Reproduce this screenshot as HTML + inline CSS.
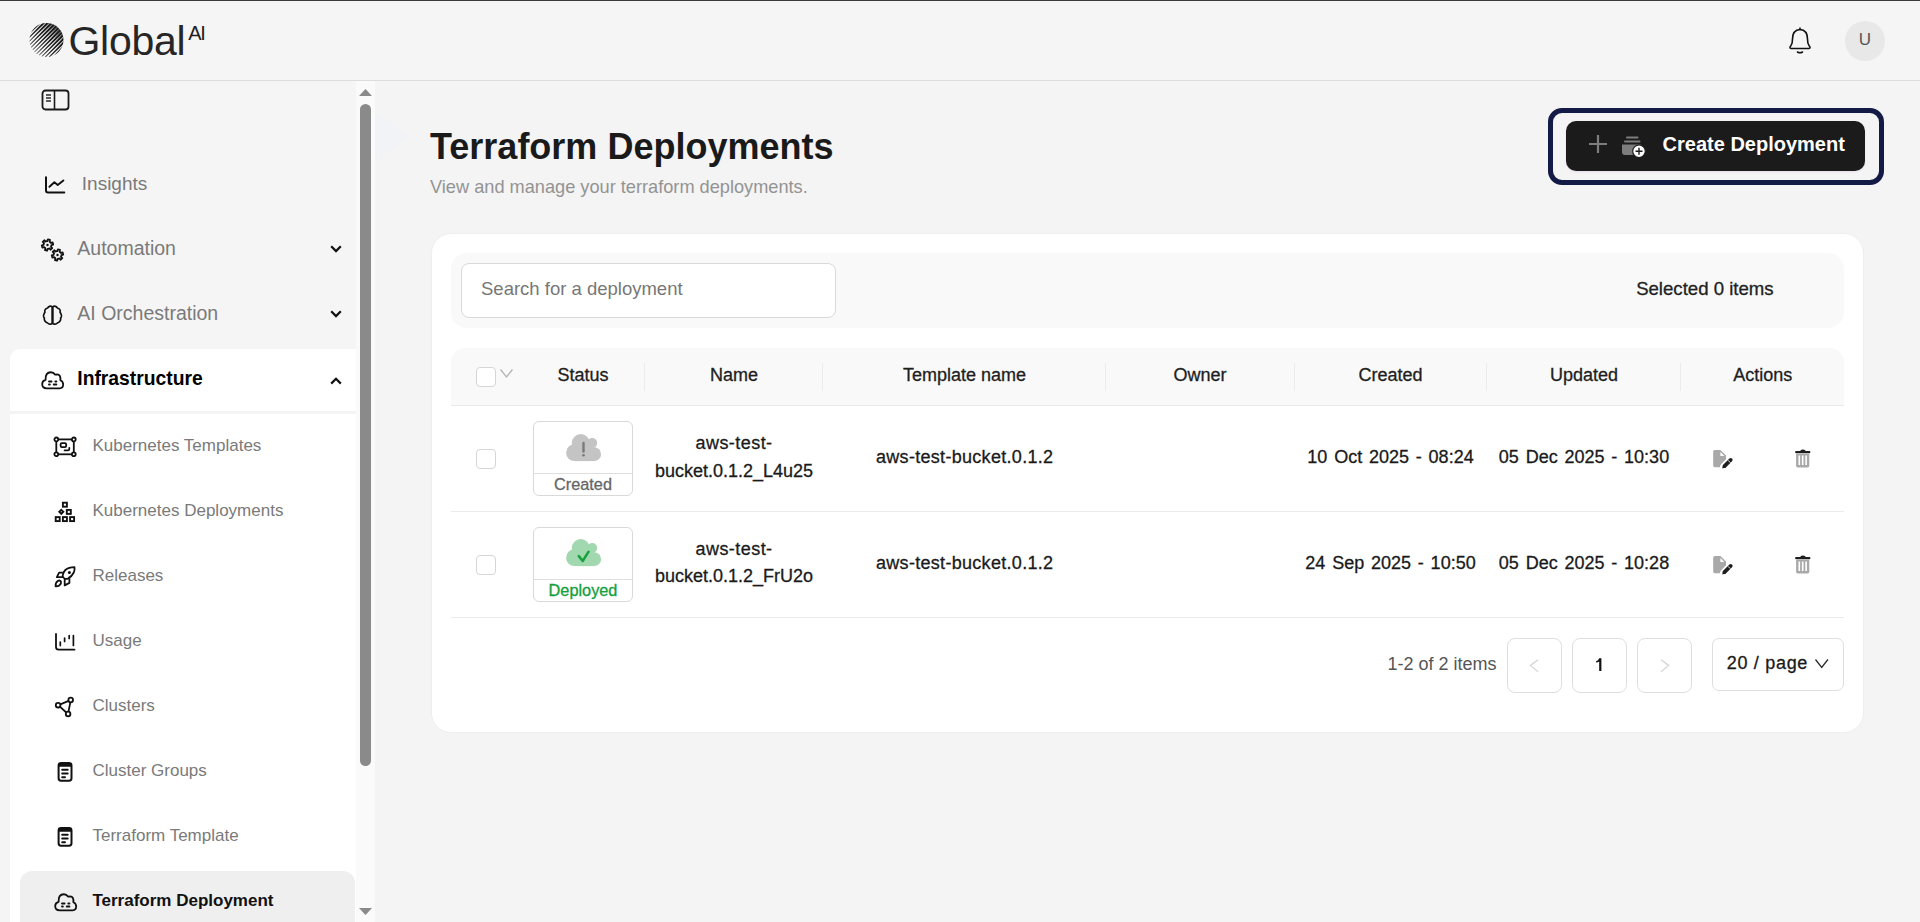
<!DOCTYPE html><html><head><meta charset="utf-8"><title>Terraform Deployments</title><style>
html,body{margin:0;padding:0;}
body{width:1920px;height:922px;overflow:hidden;position:relative;background:#f5f5f5;font-family:"Liberation Sans",sans-serif;}
.t{position:absolute;white-space:nowrap;}
.r{position:absolute;box-sizing:border-box;}
.m{-webkit-text-stroke:0.3px currentColor;}
</style></head><body>
<div class="r" style="left:0px;top:0px;width:1920px;height:1px;background:#3a3a3a"></div>
<div class="r" style="left:0px;top:80px;width:1920px;height:1px;background:#dcdcdc"></div>
<svg class="r" style="left:29px;top:23px" width="36" height="36" viewBox="0 0 36 36"><defs><clipPath id="lc"><circle cx="17.5" cy="17" r="17"/></clipPath></defs><g clip-path="url(#lc)" fill="#1c1c1c"><path d="M-13.33 20.11 L21.67 -12.77 L19.55 -14.89 L-13.33 20.11Z"/><path d="M-11.35 22.09 L23.65 -10.79 L21.53 -12.91 L-11.35 22.09Z"/><path d="M-9.37 24.07 L25.63 -8.81 L23.51 -10.93 L-9.37 24.07Z"/><path d="M-7.39 26.05 L27.61 -6.83 L25.49 -8.95 L-7.39 26.05Z"/><path d="M-5.41 28.03 L29.59 -4.85 L27.47 -6.97 L-5.41 28.03Z"/><path d="M-3.43 30.01 L31.57 -2.87 L29.45 -4.99 L-3.43 30.01Z"/><path d="M-1.45 31.99 L33.55 -0.89 L31.43 -3.01 L-1.45 31.99Z"/><path d="M0.53 33.97 L35.53 1.09 L33.41 -1.03 L0.53 33.97Z"/><path d="M2.51 35.95 L37.51 3.07 L35.39 0.95 L2.51 35.95Z"/><path d="M4.49 37.93 L39.49 5.05 L37.37 2.93 L4.49 37.93Z"/><path d="M6.47 39.91 L41.47 7.03 L39.35 4.91 L6.47 39.91Z"/><path d="M8.45 41.89 L43.45 9.01 L41.33 6.89 L8.45 41.89Z"/><path d="M10.43 43.87 L45.43 10.99 L43.31 8.87 L10.43 43.87Z"/><path d="M12.41 45.85 L47.41 12.97 L45.29 10.85 L12.41 45.85Z"/><path d="M14.39 47.83 L49.39 14.95 L47.27 12.83 L14.39 47.83Z"/></g></svg>
<div class="t" style="left:68.50px;top:20.59px;font-size:41px;line-height:41px;color:#262626;font-weight:normal;letter-spacing:-0.3px">Global</div>
<div class="t" style="left:188.30px;top:23.27px;font-size:20px;line-height:20px;color:#1e1e1e;font-weight:normal;letter-spacing:-1.3px">AI</div>
<svg class="r" style="left:1786px;top:26px" width="28" height="30" viewBox="0 0 28 30"><path d="M4 21.5 Q4 20.5 5 19.5 Q6.5 17.5 6.5 13 Q6.5 4 14 3.5 Q21.5 4 21.5 13 Q21.5 17.5 23 19.5 Q24 20.5 24 21.5 Q24 22.5 23 22.5 L5 22.5 Q4 22.5 4 21.5 Z M14 1.5 L14 3.5" fill="none" stroke="#111" stroke-width="1.6" stroke-linejoin="round"/><path d="M11.5 26 Q14 27.5 16.5 26" fill="none" stroke="#111" stroke-width="1.6" stroke-linecap="round"/></svg>
<div class="r" style="left:1845px;top:20.5px;width:40px;height:40px;background:#e8e8e8;border-radius:50%"></div>
<div class="t" style="left:1465.00px;width:800px;text-align:center;top:30.81px;font-size:17px;line-height:17px;color:#555;font-weight:normal;">U</div>
<svg class="r" style="left:41px;top:89px" width="29" height="22" viewBox="0 0 29 22"><rect x="1.5" y="1.5" width="26" height="19" rx="3" fill="none" stroke="#1a1a1a" stroke-width="1.8"/><line x1="13.5" y1="1.5" x2="13.5" y2="20.5" stroke="#1a1a1a" stroke-width="1.6"/><line x1="5" y1="6" x2="10" y2="6" stroke="#1a1a1a" stroke-width="1.4"/><line x1="5" y1="9" x2="10" y2="9" stroke="#1a1a1a" stroke-width="1.4"/><line x1="5" y1="12" x2="10" y2="12" stroke="#1a1a1a" stroke-width="1.4"/></svg>
<svg class="r" style="left:43px;top:175px" width="24" height="21" viewBox="0 0 24 21"><path d="M3 2.2 V15.6 Q3 17.6 5 17.6 H21.3" fill="none" stroke="#111" stroke-width="2" stroke-linecap="round" stroke-linejoin="round"/><path d="M6.4 11.8 L11.4 7.3 L14.7 9.9 L20.4 5.4" fill="none" stroke="#111" stroke-width="1.9" stroke-linecap="round" stroke-linejoin="round"/></svg>
<div class="t" style="left:81.80px;top:174.32px;font-size:19px;line-height:19px;color:#7a7a7a;font-weight:normal;">Insights</div>
<svg class="r" style="left:38px;top:236px" width="28" height="28" viewBox="0 0 28 28"><path d="M8.49 5.23 L9.36 5.10 L9.90 3.31 L12.00 3.88 L11.57 5.69 L12.26 6.24 L12.81 6.93 L14.62 6.50 L15.19 8.60 L13.40 9.14 L13.27 10.01 L12.94 10.83 L14.23 12.19 L12.69 13.73 L11.33 12.44 L10.51 12.77 L9.64 12.90 L9.10 14.69 L7.00 14.12 L7.43 12.31 L6.74 11.76 L6.19 11.07 L4.38 11.50 L3.81 9.40 L5.60 8.86 L5.73 7.99 L6.06 7.17 L4.77 5.81 L6.31 4.27 L7.67 5.56Z" fill="none" stroke="#111" stroke-width="1.8" stroke-linejoin="round"/><circle cx="9.5" cy="9" r="1.2" fill="#111"/><path d="M18.49 15.23 L19.36 15.10 L19.90 13.31 L22.00 13.88 L21.57 15.69 L22.26 16.24 L22.81 16.93 L24.62 16.50 L25.19 18.60 L23.40 19.14 L23.27 20.01 L22.94 20.83 L24.23 22.19 L22.69 23.73 L21.33 22.44 L20.51 22.77 L19.64 22.90 L19.10 24.69 L17.00 24.12 L17.43 22.31 L16.74 21.76 L16.19 21.07 L14.38 21.50 L13.81 19.40 L15.60 18.86 L15.73 17.99 L16.06 17.17 L14.77 15.81 L16.31 14.27 L17.67 15.56Z" fill="none" stroke="#111" stroke-width="1.8" stroke-linejoin="round"/><circle cx="19.5" cy="19" r="1.2" fill="#111"/></svg>
<div class="t" style="left:77.30px;top:238.69px;font-size:19.5px;line-height:19.5px;color:#7a7a7a;font-weight:normal;">Automation</div>
<svg class="r" style="left:328px;top:242px" width="16" height="12" viewBox="0 0 16 12"><path d="M3.2 4.3 L8 9.1 L12.8 4.3" fill="none" stroke="#111" stroke-width="2.2"/></svg>
<svg class="r" style="left:41px;top:304px" width="23" height="23" viewBox="0 0 23 23"><g transform="translate(11.5 11.3) scale(0.92 0.95) translate(-11.5 -11.2)"><path d="M11.1 2.3 Q9.9 1.2 8.2 1.8 Q6.8 2.2 6.3 3.5 Q4.3 3.8 3.4 5.6 Q2.8 6.8 3.3 8.1 Q2.4 8.9 2.2 10.2 Q1.4 11.3 1.9 12.8 Q2.3 13.7 2.7 14.2 Q2.3 15.5 3.1 16.9 Q4.1 18.6 6.2 19.3 Q7.5 20.8 9.3 20.5 Q10.6 20.5 11.1 19.8 Z M11.9 2.3 Q13.1 1.2 14.8 1.8 Q16.2 2.2 16.7 3.5 Q18.7 3.8 19.6 5.6 Q20.2 6.8 19.7 8.1 Q20.6 8.9 20.8 10.2 Q21.6 11.3 21.1 12.8 Q20.7 13.7 20.3 14.2 Q20.7 15.5 19.9 16.9 Q18.9 18.6 16.8 19.3 Q15.5 20.8 13.7 20.5 Q12.4 20.5 11.9 19.8 Z" fill="none" stroke="#111" stroke-width="1.8" stroke-linejoin="round"/></g></svg>
<div class="t" style="left:77.30px;top:304.09px;font-size:19.5px;line-height:19.5px;color:#7a7a7a;font-weight:normal;">AI Orchestration</div>
<svg class="r" style="left:328px;top:307px" width="16" height="12" viewBox="0 0 16 12"><path d="M3.2 4.3 L8 9.1 L12.8 4.3" fill="none" stroke="#111" stroke-width="2.2"/></svg>
<div class="r" style="left:10px;top:349px;width:346px;height:600px;background:#fff;border-top-left-radius:10px"></div>
<div class="r" style="left:10px;top:411px;width:346px;height:3px;background:#f3f3f3"></div>
<svg class="r" style="left:40px;top:370.5px" width="26" height="20" viewBox="0 0 26 20"><g transform="translate(0.2,0) scale(0.95)"><path d="M6.7 18.2 Q2.1 18.2 2.1 13.8 Q2.1 10.3 5.7 9.3 Q5.3 1.3 11.2 1.3 Q14 1.3 15.8 3.9 Q16.6 3.6 17.8 3.6 Q21.9 3.8 21.2 9.7 Q24.2 11 24.2 14.2 Q24 18.2 20.5 18.2 Z" fill="none" stroke="#111" stroke-width="1.9" stroke-linejoin="round"/><path d="M9.3 11.0 H11.9 M16.0 11.0 H17.0 M9.3 14.2 H10.1 M14.3 14.2 H17.0" stroke="#111" stroke-width="2.1" stroke-linecap="round"/></g></svg>
<div class="t" style="left:77.30px;top:368.96px;font-size:19.3px;line-height:19.3px;color:#000;font-weight:bold;">Infrastructure</div>
<svg class="r" style="left:328px;top:374px" width="16" height="12" viewBox="0 0 16 12"><path d="M3.2 9.6 L8 4.8 L12.8 9.6" fill="none" stroke="#111" stroke-width="2.2"/></svg>
<div class="t" style="left:92.50px;top:436.61px;font-size:17px;line-height:17px;color:#7a7a7a;font-weight:normal;">Kubernetes Templates</div>
<div class="t" style="left:92.50px;top:501.61px;font-size:17px;line-height:17px;color:#7a7a7a;font-weight:normal;">Kubernetes Deployments</div>
<div class="t" style="left:92.50px;top:566.61px;font-size:17px;line-height:17px;color:#7a7a7a;font-weight:normal;">Releases</div>
<div class="t" style="left:92.50px;top:631.61px;font-size:17px;line-height:17px;color:#7a7a7a;font-weight:normal;">Usage</div>
<div class="t" style="left:92.50px;top:696.61px;font-size:17px;line-height:17px;color:#7a7a7a;font-weight:normal;">Clusters</div>
<div class="t" style="left:92.50px;top:761.61px;font-size:17px;line-height:17px;color:#7a7a7a;font-weight:normal;">Cluster Groups</div>
<div class="t" style="left:92.50px;top:826.61px;font-size:17px;line-height:17px;color:#7a7a7a;font-weight:normal;">Terraform Template</div>
<svg class="r" style="left:52px;top:435px" width="26" height="24" viewBox="0 0 26 24"><g fill="none" stroke="#111" stroke-width="1.8"><rect x="4.3" y="4.4" width="17.5" height="14.9"/><rect x="8.6" y="8.1" width="5.6" height="4" rx="1.3"/><path d="M12.6 15.4 H15.9 Q17.3 15.4 17.3 14 V12.8" stroke-linecap="round"/></g><g fill="#fff" stroke="#111" stroke-width="1.8"><circle cx="4.3" cy="4.4" r="1.9"/><circle cx="21.8" cy="4.4" r="1.9"/><circle cx="4.3" cy="19.3" r="1.9"/><circle cx="21.8" cy="19.3" r="1.9"/></g></svg>
<svg class="r" style="left:52px;top:500px" width="26" height="24" viewBox="0 0 26 24"><g fill="none" stroke="#111" stroke-width="1.9"><rect x="10.9" y="2.7" width="4" height="4"/><rect x="14.8" y="9.9" width="4" height="4"/><rect x="3.7" y="17.1" width="4" height="4"/><rect x="10.9" y="17.1" width="4" height="4"/><rect x="18.1" y="17.1" width="4" height="4"/><path d="M9.3 9.8 L11.3 11.8 L9.3 13.8 L7.3 11.8 Z"/></g></svg>
<svg class="r" style="left:52px;top:564px" width="26" height="26" viewBox="0 0 26 26"><g fill="none" stroke="#111" stroke-width="1.8" stroke-linejoin="round"><path d="M22.5 3.2 Q16.6 3.2 13.3 6 Q11 8.3 10.6 12 Q11.3 14.2 13 14.8 Q14.5 15.2 15.9 14.6 Q19.6 12.8 21.8 8.5 Q22.9 6 22.5 3.2 Z"/><path d="M10.9 8.7 H7.1 L4.85 13.1 H11"/><path d="M12.7 15 V21.4 L17.4 18.9 V14.2"/><path d="M3.6 22.4 Q3.3 18.5 5.8 16.9 Q8 15.9 9 17.6 Q9.5 19.5 7.6 21.2 Q6 22.5 3.6 22.4 Z"/></g><circle cx="17.4" cy="8.5" r="1.5" fill="#111"/></svg>
<svg class="r" style="left:52px;top:630px" width="26" height="24" viewBox="0 0 26 24"><path d="M4 4 V17 Q4 19.7 6.7 19.7 H22.5" fill="none" stroke="#111" stroke-width="1.8" stroke-linecap="round"/><path d="M8.3 12 V15.5 M12.6 8 V11.5 M17.2 5.5 V8.5 M21.4 5.5 V15.5" stroke="#111" stroke-width="1.7" stroke-linecap="round"/></svg>
<svg class="r" style="left:52px;top:694px" width="26" height="26" viewBox="0 0 26 26"><g fill="none" stroke="#111" stroke-width="1.8"><circle cx="6.1" cy="11.2" r="2.3"/><circle cx="18.7" cy="6" r="2.3"/><circle cx="16.1" cy="20" r="2.3"/><path d="M8.3 10.3 L16.6 6.9 M7.9 12.7 L14.3 18.5 M18.3 8.3 L16.5 17.7"/></g></svg>
<svg class="r" style="left:53px;top:759px" width="22" height="24" viewBox="0 0 22 24"><rect x="5.6" y="4" width="12.9" height="17.7" rx="2.4" fill="none" stroke="#111" stroke-width="2"/><path d="M5.6 7.7 V6.4 Q5.6 4 8 4 H16.1 Q18.5 4 18.5 6.4 V7.7 Z" fill="#111"/><path d="M9.2 10.8 H14.7 M9.2 14.5 H14.7 M9.2 18.3 H12" stroke="#111" stroke-width="2" stroke-linecap="round"/></svg>
<svg class="r" style="left:53px;top:824px" width="22" height="24" viewBox="0 0 22 24"><rect x="5.6" y="4" width="12.9" height="17.7" rx="2.4" fill="none" stroke="#111" stroke-width="2"/><path d="M5.6 7.7 V6.4 Q5.6 4 8 4 H16.1 Q18.5 4 18.5 6.4 V7.7 Z" fill="#111"/><path d="M9.2 10.8 H14.7 M9.2 14.5 H14.7 M9.2 18.3 H12" stroke="#111" stroke-width="2" stroke-linecap="round"/></svg>
<div class="r" style="left:20px;top:871px;width:335px;height:80px;background:#efefef;border-radius:12px"></div>
<svg class="r" style="left:52.6px;top:892.8px" width="26" height="20" viewBox="0 0 26 20"><g transform="translate(0.2,0) scale(0.95)"><path d="M6.7 18.2 Q2.1 18.2 2.1 13.8 Q2.1 10.3 5.7 9.3 Q5.3 1.3 11.2 1.3 Q14 1.3 15.8 3.9 Q16.6 3.6 17.8 3.6 Q21.9 3.8 21.2 9.7 Q24.2 11 24.2 14.2 Q24 18.2 20.5 18.2 Z" fill="none" stroke="#111" stroke-width="1.9" stroke-linejoin="round"/><path d="M9.3 11.0 H11.9 M16.0 11.0 H17.0 M9.3 14.2 H10.1 M14.3 14.2 H17.0" stroke="#111" stroke-width="2.1" stroke-linecap="round"/></g></svg>
<div class="t" style="left:92.40px;top:891.91px;font-size:17px;line-height:17px;color:#111;font-weight:bold;">Terraform Deployment</div>
<div class="r" style="left:356px;top:81px;width:19px;height:841px;background:#fafafa"></div>
<svg class="r" style="left:358px;top:88px" width="15" height="9" viewBox="0 0 15 9"><path d="M1 8 L7.5 1 L14 8 Z" fill="#8a8a8a"/></svg>
<div class="r" style="left:360px;top:104px;width:11px;height:662px;background:#8a8a8a;border-radius:6px"></div>
<svg class="r" style="left:358px;top:907px" width="15" height="9" viewBox="0 0 15 9"><path d="M1 1 L7.5 8 L14 1 Z" fill="#8a8a8a"/></svg>
<div class="r" style="left:375px;top:81px;width:1545px;height:841px;background:#f4f4f4"></div>
<svg class="r" style="left:375px;top:100px" width="40" height="70" viewBox="0 0 40 70"><path d="M0 12.2 L35 36.6 L0 61.6 Z" fill="#f1f3f7"/></svg>
<div class="t" style="left:430.00px;top:129.03px;font-size:36px;line-height:36px;color:#1a1a1a;font-weight:bold;">Terraform Deployments</div>
<div class="t" style="left:430.00px;top:178.29px;font-size:18.2px;line-height:18.2px;color:#939393;font-weight:normal;">View and manage your terraform deployments.</div>
<div class="r" style="left:1548px;top:108px;width:336px;height:77px;border:5px solid #141a46;border-radius:14px"></div>
<div class="r" style="left:1566px;top:121px;width:299px;height:50px;background:#1b1b1b;border-radius:10px;box-shadow:0 1px 2px rgba(140,90,200,0.15)"></div>
<svg class="r" style="left:1587px;top:133px" width="22" height="22" viewBox="0 0 22 22"><path d="M11 2 V20 M2 11 H20" stroke="#7d7d7d" stroke-width="2.2"/></svg>
<svg class="r" style="left:1620px;top:134px" width="28" height="26" viewBox="0 0 28 26"><rect x="6" y="2.6" width="12.5" height="1.9" rx="0.9" fill="#7d7d7d"/><rect x="4" y="6.5" width="16.5" height="2" rx="1" fill="#7d7d7d"/><path d="M2 10.5 H21 V21 H5 Q2 21 2 18 Z" fill="#7d7d7d"/><circle cx="19" cy="17.3" r="6.3" fill="#fff" stroke="#1b1b1b" stroke-width="1.2"/><path d="M19 13.8 V20.8 M15.5 17.3 H22.5" stroke="#1b1b1b" stroke-width="1.4"/></svg>
<div class="t" style="left:1662.60px;top:134.27px;font-size:20px;line-height:20px;color:#fff;font-weight:bold;">Create Deployment</div>
<div class="r" style="left:431px;top:233px;width:1433px;height:500px;background:#fff;border:1px solid #eeeeee;border-radius:20px"></div>
<div class="r" style="left:451px;top:253px;width:1393px;height:75px;background:#f9f9f9;border-radius:16px"></div>
<div class="r" style="left:461px;top:263px;width:375px;height:55px;background:#fff;border:1px solid #d9d9d9;border-radius:8px"></div>
<div class="t" style="left:481.00px;top:279.64px;font-size:18.5px;line-height:18.5px;color:#777;font-weight:normal;">Search for a deployment</div>
<div class="t m" style="left:973.60px;width:800px;text-align:right;top:279.96px;font-size:18.6px;line-height:18.6px;color:#222;font-weight:normal;">Selected 0 items</div>
<div class="r" style="left:451px;top:348px;width:1393px;height:58px;background:#f9f9f9;border-radius:14px 14px 0 0;border-bottom:1px solid #e9e9e9"></div>
<div class="r" style="left:644px;top:363px;width:1px;height:28px;background:#ececec"></div>
<div class="r" style="left:822px;top:363px;width:1px;height:28px;background:#ececec"></div>
<div class="r" style="left:1105px;top:363px;width:1px;height:28px;background:#ececec"></div>
<div class="r" style="left:1294px;top:363px;width:1px;height:28px;background:#ececec"></div>
<div class="r" style="left:1486px;top:363px;width:1px;height:28px;background:#ececec"></div>
<div class="r" style="left:1680px;top:363px;width:1px;height:28px;background:#ececec"></div>
<div class="r" style="left:476px;top:367px;width:20px;height:20px;background:#fff;border:1px solid #d6d6d6;border-radius:4px"></div>
<svg class="r" style="left:499px;top:367px" width="15" height="13" viewBox="0 0 15 13"><path d="M1.5 2.5 L7.5 10 L13.5 2.5" fill="none" stroke="#b5b5b5" stroke-width="1.3"/></svg>
<div class="t m" style="left:183.00px;width:800px;text-align:center;top:366.26px;font-size:18px;line-height:18px;color:#1e1e1e;font-weight:normal;">Status</div>
<div class="t m" style="left:334.00px;width:800px;text-align:center;top:366.26px;font-size:18px;line-height:18px;color:#1e1e1e;font-weight:normal;">Name</div>
<div class="t m" style="left:564.50px;width:800px;text-align:center;top:366.26px;font-size:18px;line-height:18px;color:#1e1e1e;font-weight:normal;">Template name</div>
<div class="t m" style="left:800.00px;width:800px;text-align:center;top:366.26px;font-size:18px;line-height:18px;color:#1e1e1e;font-weight:normal;">Owner</div>
<div class="t m" style="left:990.50px;width:800px;text-align:center;top:366.26px;font-size:18px;line-height:18px;color:#1e1e1e;font-weight:normal;">Created</div>
<div class="t m" style="left:1184.00px;width:800px;text-align:center;top:366.26px;font-size:18px;line-height:18px;color:#1e1e1e;font-weight:normal;">Updated</div>
<div class="t m" style="left:1362.70px;width:800px;text-align:center;top:366.26px;font-size:18px;line-height:18px;color:#1e1e1e;font-weight:normal;">Actions</div>
<div class="r" style="left:451px;top:511px;width:1393px;height:1px;background:#ebebeb"></div>
<div class="r" style="left:451px;top:617px;width:1393px;height:1px;background:#ebebeb"></div>
<div class="r" style="left:476px;top:449px;width:20px;height:20px;background:#fff;border:1px solid #d6d6d6;border-radius:4px"></div>
<div class="r" style="left:533px;top:421px;width:100px;height:75px;background:#fff;border:1px solid #d9d9d9;border-radius:6px"></div>
<div class="r" style="left:534px;top:473px;width:98px;height:1px;background:#dedede"></div>
<div class="t m" style="left:183.00px;width:800px;text-align:center;top:476.40px;font-size:16.3px;line-height:16.3px;color:#666;font-weight:normal;">Created</div>
<svg class="r" style="left:566px;top:434px" width="36" height="28" viewBox="0 0 36 28"><g fill="#c4c4c4"><circle cx="8.5" cy="18.7" r="8.4"/><circle cx="14.8" cy="9" r="9"/><circle cx="26.2" cy="9" r="5"/><circle cx="28.2" cy="20.2" r="6.9"/><rect x="8.5" y="12" width="19.7" height="15.1"/><rect x="14" y="9" width="12" height="8"/></g></svg>
<svg class="r" style="left:579px;top:440px" width="10" height="18" viewBox="0 0 10 18"><path d="M4.5 3 V11.5" stroke="#7a7a7a" stroke-width="2.4" stroke-linecap="round"/><circle cx="4.5" cy="15.3" r="1.3" fill="#7a7a7a"/></svg>
<div class="r" style="left:476px;top:555px;width:20px;height:20px;background:#fff;border:1px solid #d6d6d6;border-radius:4px"></div>
<div class="r" style="left:533px;top:527px;width:100px;height:75px;background:#fff;border:1px solid #d9d9d9;border-radius:6px"></div>
<div class="r" style="left:534px;top:579px;width:98px;height:1px;background:#dedede"></div>
<div class="t m" style="left:183.00px;width:800px;text-align:center;top:582.40px;font-size:16.3px;line-height:16.3px;color:#12a03c;font-weight:normal;">Deployed</div>
<svg class="r" style="left:566px;top:539.4px" width="36" height="28" viewBox="0 0 36 28"><g fill="#a2d8b0"><circle cx="8.5" cy="18.7" r="8.4"/><circle cx="14.8" cy="9" r="9"/><circle cx="26.2" cy="9" r="5"/><circle cx="28.2" cy="20.2" r="6.9"/><rect x="8.5" y="12" width="19.7" height="15.1"/><rect x="14" y="9" width="12" height="8"/></g></svg>
<svg class="r" style="left:576px;top:548px" width="16" height="16" viewBox="0 0 16 16"><path d="M2.8 8.1 L6.7 13 L12.6 3.7" fill="none" stroke="#17a23f" stroke-width="2.5" stroke-linecap="round" stroke-linejoin="round"/></svg>
<div class="t m" style="left:334.00px;width:800px;text-align:center;top:434.16px;font-size:18px;line-height:18px;color:#1a1a1a;font-weight:normal;letter-spacing:0.45px">aws-test-</div>
<div class="t m" style="left:334.00px;width:800px;text-align:center;top:461.76px;font-size:18px;line-height:18px;color:#1a1a1a;font-weight:normal;">bucket.0.1.2_L4u25</div>
<div class="t m" style="left:564.70px;width:800px;text-align:center;top:447.76px;font-size:18px;line-height:18px;color:#1a1a1a;font-weight:normal;letter-spacing:0.3px">aws-test-bucket.0.1.2</div>
<div class="t m" style="left:990.50px;width:800px;text-align:center;top:447.76px;font-size:18px;line-height:18px;color:#1a1a1a;font-weight:normal;word-spacing:1.8px">10 Oct 2025 - 08:24</div>
<div class="t m" style="left:1184.00px;width:800px;text-align:center;top:447.76px;font-size:18px;line-height:18px;color:#1a1a1a;font-weight:normal;word-spacing:1.8px">05 Dec 2025 - 10:30</div>
<svg class="r" style="left:1711px;top:449px" width="24" height="22" viewBox="0 0 24 22"><path d="M3.8 0.9 H9.4 L15 6.4 V18.2 H3.8 Q2.2 18.2 2.2 16.6 V2.5 Q2.2 0.9 3.8 0.9 Z" fill="#a9a9a9"/><path d="M9.4 3 V6.9 H13.3 Z" fill="#fff"/><path d="M12.4 17.4 L19.5 10.3" stroke="#fff" stroke-width="6.4" stroke-linecap="round"/><path d="M11.2 19.4 L12.1 15.7 L14.9 18.5 Z" fill="#1e1e1e"/><path d="M13.5 17.1 L19.7 10.9" stroke="#1e1e1e" stroke-width="3.8" stroke-linecap="round"/><path d="M17.0 11.3 L19.4 13.7" stroke="#fff" stroke-width="0.9"/></svg>
<svg class="r" style="left:1794px;top:449px" width="18" height="20" viewBox="0 0 18 20"><rect x="1.1" y="2.1" width="15.3" height="2.2" rx="1" fill="#1e1e1e"/><path d="M6.2 2.6 Q6.2 0.4 8.9 0.4 Q11.6 0.4 11.6 2.6 Z" fill="#1e1e1e"/><path d="M2.1 4.8 H15.3 V16.8 Q15.3 18.5 13.6 18.5 H3.8 Q2.1 18.5 2.1 16.8 Z" fill="#a9a9a9"/><path d="M5.3 6.6 V15.9 M8.7 6.6 V15.9 M12.1 6.6 V15.9" stroke="#fff" stroke-width="1.6"/></svg>
<div class="t m" style="left:334.00px;width:800px;text-align:center;top:539.76px;font-size:18px;line-height:18px;color:#1a1a1a;font-weight:normal;letter-spacing:0.45px">aws-test-</div>
<div class="t m" style="left:334.00px;width:800px;text-align:center;top:567.16px;font-size:18px;line-height:18px;color:#1a1a1a;font-weight:normal;">bucket.0.1.2_FrU2o</div>
<div class="t m" style="left:564.70px;width:800px;text-align:center;top:553.56px;font-size:18px;line-height:18px;color:#1a1a1a;font-weight:normal;letter-spacing:0.3px">aws-test-bucket.0.1.2</div>
<div class="t m" style="left:990.50px;width:800px;text-align:center;top:553.56px;font-size:18px;line-height:18px;color:#1a1a1a;font-weight:normal;word-spacing:1.8px">24 Sep 2025 - 10:50</div>
<div class="t m" style="left:1184.00px;width:800px;text-align:center;top:553.56px;font-size:18px;line-height:18px;color:#1a1a1a;font-weight:normal;word-spacing:1.8px">05 Dec 2025 - 10:28</div>
<svg class="r" style="left:1711px;top:555px" width="24" height="22" viewBox="0 0 24 22"><path d="M3.8 0.9 H9.4 L15 6.4 V18.2 H3.8 Q2.2 18.2 2.2 16.6 V2.5 Q2.2 0.9 3.8 0.9 Z" fill="#a9a9a9"/><path d="M9.4 3 V6.9 H13.3 Z" fill="#fff"/><path d="M12.4 17.4 L19.5 10.3" stroke="#fff" stroke-width="6.4" stroke-linecap="round"/><path d="M11.2 19.4 L12.1 15.7 L14.9 18.5 Z" fill="#1e1e1e"/><path d="M13.5 17.1 L19.7 10.9" stroke="#1e1e1e" stroke-width="3.8" stroke-linecap="round"/><path d="M17.0 11.3 L19.4 13.7" stroke="#fff" stroke-width="0.9"/></svg>
<svg class="r" style="left:1794px;top:555px" width="18" height="20" viewBox="0 0 18 20"><rect x="1.1" y="2.1" width="15.3" height="2.2" rx="1" fill="#1e1e1e"/><path d="M6.2 2.6 Q6.2 0.4 8.9 0.4 Q11.6 0.4 11.6 2.6 Z" fill="#1e1e1e"/><path d="M2.1 4.8 H15.3 V16.8 Q15.3 18.5 13.6 18.5 H3.8 Q2.1 18.5 2.1 16.8 Z" fill="#a9a9a9"/><path d="M5.3 6.6 V15.9 M8.7 6.6 V15.9 M12.1 6.6 V15.9" stroke="#fff" stroke-width="1.6"/></svg>
<div class="t" style="left:696.60px;width:800px;text-align:right;top:654.76px;font-size:18px;line-height:18px;color:#555;font-weight:normal;">1-2 of 2 items</div>
<div class="r" style="left:1507px;top:638px;width:55px;height:55px;background:#fff;border:1px solid #dedede;border-radius:8px"></div>
<div class="r" style="left:1572px;top:638px;width:55px;height:55px;background:#fff;border:1px solid #dedede;border-radius:8px"></div>
<div class="r" style="left:1637px;top:638px;width:55px;height:55px;background:#fff;border:1px solid #dedede;border-radius:8px"></div>
<svg class="r" style="left:1593px;top:655px" width="14" height="20" viewBox="0 0 14 20"><path d="M6.2 3.2 H8.4 V16 H6.2 V6.4 Q5.1 7.2 3.1 7.5 V6.2 Q5.4 5.6 6.2 3.2 Z" fill="#111"/></svg>
<svg class="r" style="left:1526px;top:655px" width="16" height="22" viewBox="0 0 16 22"><path d="M12 4.7 L4.4 10.4 L12 16.7" fill="none" stroke="#d6d6d6" stroke-width="1.3"/></svg>
<svg class="r" style="left:1656px;top:655px" width="16" height="22" viewBox="0 0 16 22"><path d="M5 4.7 L12.6 10.4 L5 16.7" fill="none" stroke="#d6d6d6" stroke-width="1.3"/></svg>
<div class="r" style="left:1712px;top:638px;width:132px;height:53px;background:#fff;border:1px solid #dedede;border-radius:7px"></div>
<div class="t m" style="left:1726.70px;top:653.76px;font-size:18px;line-height:18px;color:#1a1a1a;font-weight:normal;letter-spacing:0.7px">20 / page</div>
<svg class="r" style="left:1813px;top:656px" width="18" height="14" viewBox="0 0 18 14"><path d="M2.5 3.5 L8.7 11.5 L14.9 3.5" fill="none" stroke="#2a2a2a" stroke-width="1.3"/></svg>
</body></html>
